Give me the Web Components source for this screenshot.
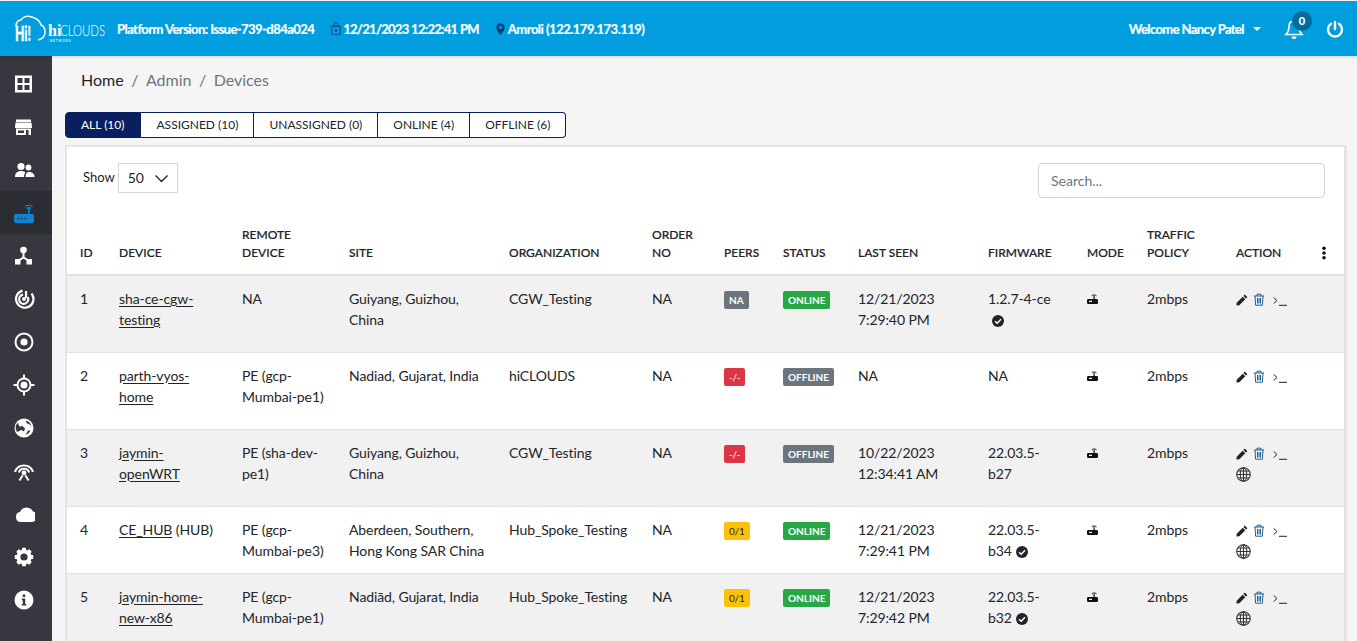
<!DOCTYPE html>
<html lang="en">
<head>
<meta charset="utf-8">
<title>Devices</title>
<style>
  html, body { margin: 0; height: 100%; overflow: hidden; }
  body { font-family: Lato, "Liberation Sans", sans-serif; background: #f5f5f5; color: #212529; }
  app-shell { height: 100vh; }
</style>
</head>
<body>
<app-shell>
  <top-bar slot="top"></top-bar>
  <side-nav slot="side"></side-nav>
  <bread-crumb>
    <span>Home</span><span>Admin</span><span>Devices</span>
  </bread-crumb>
  <filter-tabs></filter-tabs>
  <device-card></device-card>
</app-shell>

<script>
const ICONS = {
  grid: '<path fill-rule="evenodd" d="M2 2.500h17v17H2zM4.500 5v5h5V5zm7 0v5h5V5zm-7 7v5h5v-5zm7 0v5h5v-5z"/>',
  store: '<path fill-rule="evenodd" d="M3 3.500h15V6H3zM2.500 6.500h16l.5 4.500v1H2v-1zM3 12.500h15v6.500h-2.500v-5H13v5H3zM5 14.500v2.500h6v-2.500z"/>',
  people: '<circle cx="8" cy="7.500" r="3.600"/><circle cx="15.500" cy="8.500" r="2.900"/><path d="M2 18c0-4 2.500-6 6-6 2 0 3.500.5 4.500 1.500-1 1-1.500 2.500-1.500 4.500zM12.500 18c0-3.500 1.500-5 3.500-5 3 0 5.500 1.500 5.500 5z"/>',
  radar: '<g fill="none" stroke="#fff" stroke-width="2.200"><path d="M9.500 2.600A8.700 8.700 0 1 0 18.500 5.500"/><path d="M10 6.700A4.600 4.600 0 1 0 14.700 9"/><path d="M13 3v7"/></g><circle cx="11" cy="11" r="2"/>',
  target: '<path fill-rule="evenodd" d="M11 1.500a9.500 9.500 0 1 1 0 19 9.500 9.500 0 0 1 0-19zm0 2a7.500 7.500 0 1 0 0 15 7.500 7.500 0 0 0 0-15z"/><circle cx="11" cy="11" r="3.600"/>',
  crosshair: '<path fill-rule="evenodd" d="M11 3.500a7.500 7.500 0 1 1 0 15 7.500 7.500 0 0 1 0-15zm0 2a5.500 5.500 0 1 0 0 11 5.500 5.500 0 0 0 0-11z"/><circle cx="11" cy="11" r="3.500"/><path d="M10 .5h2v4h-2zM10 17.500h2v4h-2zM.5 10h4v2h-4zM17.500 10h4v2h-4z"/>',
  globe: '<path fill-rule="evenodd" d="M11 1.500a9.500 9.500 0 1 1 0 19 9.500 9.500 0 0 1 0-19zM5 5.500a7.800 7.800 0 0 0-1 9.500l4.500-2 2.500 1.500 1-3-3-3-1.500 1.500L5.500 8zm8-2 .5 2.500 4 2 1 2.500a8 8 0 0 0-5.500-7zm2 10-2.500 4.500a7.800 7.800 0 0 0 5-4.500z"/>',
  wifi: '<g fill="none" stroke="#fff" stroke-width="2"><path d="M2 12a9.500 9.500 0 0 1 18 0"/><path d="M5.800 12.500a5.500 5.500 0 0 1 10.400 0"/><path d="M9.500 15.500 6.500 20.500M12.500 15.500l3 5"/></g><circle cx="11" cy="13" r="2.400"/>',
  cloud: '<path d="M6 19a5 5 0 0 1-1-9.900A7 7 0 0 1 18 8.600a5.300 5.300 0 0 1-.800 10.400z" transform="translate(2 0)"/>',
  gear: '<circle cx="11" cy="11" r="5.600" fill="none" stroke="#fff" stroke-width="4"/><g>' +
    [0, 45, 90, 135, 180, 225, 270, 315].map(a => `<rect x="9" y="1.800" width="4" height="4" rx=".6" transform="rotate(${a} 11 11)"/>`).join('') + '</g>',
  info: '<path fill-rule="evenodd" d="M11 1.500a9.500 9.500 0 1 1 0 19 9.500 9.500 0 0 1 0-19zM9.700 5.500v2.600h2.600V5.500zM8.800 9.500v1.700h1v3.800h-1v1.600h4.400V15h-1V9.500z"/>'
};

const ROUTER = '<path d="M3 12h16a2 2 0 0 1 2 2v5a2 2 0 0 1-2 2H3a2 2 0 0 1-2-2v-5a2 2 0 0 1 2-2z"/><path d="M15 5h1.600v7H15z"/><path fill="none" stroke="currentColor" stroke-width="1.200" d="M12 4.500c2-1.700 5.500-1.700 7.500 0M13.500 6.500c1.200-.9 3.300-.9 4.500 0"/>';

class AppShell extends HTMLElement {
  constructor() {
    super();
    this.attachShadow({ mode: 'open' });
    this.shadowRoot.innerHTML = `
      <style>
        :host { display: grid; grid-template-columns: 52px 1fr; grid-template-rows: 56px 1fr; overflow: hidden; }
        .top { grid-column: 1 / 3; }
        main { padding: 0 10px 0 13px; min-width: 0; overflow: hidden; }
      </style>
      <div class="top"><slot name="top"></slot></div>
      <slot name="side"></slot>
      <main><slot></slot></main>`;
  }
}

class TopBar extends HTMLElement {
  constructor() {
    super();
    this.attachShadow({ mode: 'open' });
    this.shadowRoot.innerHTML = `
      <style>
        :host { display: flex; height: 55px; margin-top: 1px; background: #009ede; color: #fff; align-items: center; box-shadow: 0 1px 3px rgba(0,0,0,.12); position: relative;
          font: 700 13px Lato, sans-serif; letter-spacing: -.55px; -webkit-text-stroke: .2px #fff; }
        .logo { display: flex; margin-left: 14px; width: 103px; flex: none; -webkit-text-stroke: 0; letter-spacing: 0; }
        .item { display: flex; align-items: center; white-space: nowrap; }
        .item svg { fill: #00407f; }
        .date { letter-spacing: -.7px; }
        .ip { letter-spacing: -.5px; }
        .right { margin-left: auto; display: flex; align-items: center; letter-spacing: -.6px; }
        .caret { width: 0; height: 0; border: 4px solid transparent; border-top-color: #fff; border-bottom: 0; margin: 0 23px 0 9px; }
        .bell { position: relative; width: 20px; height: 22px; margin-right: 22px; }
        .badge { position: absolute; top: -7px; left: 8px; width: 20px; height: 20px; border-radius: 50%; background: #006b9c; font-size: 11px; line-height: 20px; text-align: center; letter-spacing: 0; }
        .power { margin-right: 13px; display: flex; }
      </style>
      <div class="logo">
        <svg width="92" height="31" viewBox="0 0 92 31" style="overflow:visible">
          <path fill="none" stroke="#fff" stroke-width="1.500" d="M2 14C2 9 4 7 7 7 9 3 14 2.500 18 4c5 1.500 8 4 9 8 3 1 4 4 4 7 0 4-3 7-7 8"/>
          <text x="1" y="28" fill="#fff" stroke="#fff" stroke-width=".3" font-family="Lato, sans-serif" font-weight="900" font-size="20" textLength="16" lengthAdjust="spacingAndGlyphs">Hi!</text>
          <text x="34" y="23" fill="#fff" font-family="Liberation Serif, serif" font-size="16">hi</text>
          <text x="46" y="23" fill="#fff" font-family="Lato, sans-serif" font-weight="300" font-size="16" textLength="45" lengthAdjust="spacingAndGlyphs">CLOUDS</text>
          <text x="36" y="28.500" fill="#dff" font-family="Lato, sans-serif" font-size="3" letter-spacing=".9">NETWORK</text>
        </svg>
      </div>
      <span class="item" style="margin-right:17px">Platform Version: Issue-739-d84a024</span>
      <span class="item date" style="margin-right:16px">
        <svg width="10" height="13" viewBox="0 0 11 14" style="margin-right:2px"><path fill-rule="evenodd" d="M3 4V2.500a2.500 2.500 0 0 1 5 0V4h2.500v10H.5V4zm1 0h3V2.500a1.500 1.500 0 0 0-3 0zM1.500 5v8h8V5zM4.500 7.500h2v3h-2z"/></svg>12/21/2023 12:22:41 PM</span>
      <span class="item ip">
        <svg width="9" height="12" viewBox="0 0 10 13" style="margin:0 3px 0 1px"><path fill-rule="evenodd" d="M5 0a4.700 4.700 0 0 1 4.700 4.700C9.700 8 5 13 5 13S.3 8 .3 4.700A4.700 4.700 0 0 1 5 0zm0 3a1.700 1.700 0 1 0 0 3.400A1.700 1.700 0 0 0 5 3z"/></svg>Amroli (122.179.173.119)</span>
      <div class="right">
        <span>Welcome Nancy Patel</span><span class="caret"></span>
        <span class="bell">
          <svg width="20" height="22" viewBox="0 0 20 22" fill="none" stroke="#fff" stroke-width="1.600"><path d="M10 3c-3.500 0-5 2.500-5 5.500 0 4-1 6-3 8h16c-2-2-3-4-3-8C15 5.500 13.500 3 10 3z"/><path d="M7.500 18.500a2.500 2.500 0 0 0 5 0z" fill="#fff" stroke="none"/></svg>
          <span class="badge">0</span>
        </span>
        <span class="power">
          <svg width="18" height="18" viewBox="0 0 18 18" fill="none" stroke="#fff" stroke-width="2.400" stroke-linecap="round"><path d="M9 2v7"/><path d="M5 3.800a7 7 0 1 0 8 0"/></svg>
        </span>
      </div>`;
  }
}

class SideNav extends HTMLElement {
  constructor() {
    super();
    this.attachShadow({ mode: 'open' });
    const names = ['grid', 'store', 'people', 'router', 'hub', 'radar', 'target', 'crosshair', 'globe', 'wifi', 'cloud', 'gear', 'info'];
    const links = names.map(n => {
      if (n === 'router') return `<a class="on"><svg width="22" height="22" viewBox="0 0 22 22" fill="#0c84d6" color="#0c84d6">${ROUTER}<circle cx="5.500" cy="16.500" r="1" fill="#36373f"/><circle cx="9" cy="16.500" r="1" fill="#36373f"/><circle cx="12.500" cy="16.500" r="1" fill="#36373f"/></svg></a>`;
      if (n === 'hub') return `<a><svg width="22" height="22" viewBox="0 0 22 22" fill="#fff"><circle cx="10.500" cy="5" r="3.300"/><path d="M2 14h5.500v5.500H2zM13.500 14H19v5.500h-5.500z"/><path fill="none" stroke="#fff" stroke-width="2" d="M10.500 7v5.500M5 16l5.500-3.500L16 16"/></svg></a>`;
      return `<a><svg width="22" height="22" viewBox="0 0 22 22" fill="#fff">${ICONS[n]}</svg></a>`;
    }).join('');
    this.shadowRoot.innerHTML = `
      <style>
        :host { display: block; background: #36373f; padding-top: 6px; }
        a { display: flex; align-items: center; height: 43px; padding-left: 13px; }
        a.on { background: #2c2d32; }
      </style>${links}`;
  }
}

class BreadCrumb extends HTMLElement {
  constructor() {
    super();
    this.attachShadow({ mode: 'open' });
    this.shadowRoot.innerHTML = `
      <style>
        :host { display: block; padding: 14px 0 0 16px; height: 42px; font: 400 16px/20px Lato, sans-serif; color: #6c757d; }
        ::slotted(span:first-child) { color: #212529; }
        ::slotted(span:not(:first-child))::before { content: "/"; margin: 0 7.500px; color: #6c757d; }
      </style>
      <slot></slot>`;
  }
}

class FilterTabs extends HTMLElement {
  constructor() {
    super();
    this.attachShadow({ mode: 'open' });
    const tabs = ['ALL (10)', 'ASSIGNED (10)', 'UNASSIGNED (0)', 'ONLINE (4)', 'OFFLINE (6)'];
    this.shadowRoot.innerHTML = `
      <style>
        :host { display: flex; font: 400 12px/24px Lato, sans-serif; color: #212529; }
        button { font: inherit; color: inherit; background: #fff; border: 1px solid #0a1f5f; border-left: 0; padding: 0 15px; height: 26px; margin: 0; }
        button:first-of-type { background: #0a1f5f; color: #fff; border-left: 1px solid #0a1f5f; border-radius: 4px 0 0 4px; }
        button:nth-of-type(2) { padding: 0 15px 0 16px; }
        button:last-of-type { border-radius: 0 4px 4px 0; }
      </style>
      ${tabs.map(t => `<button>${t}</button>`).join('')}`;
  }
}

class DeviceCard extends HTMLElement {
  constructor() {
    super();
    this.attachShadow({ mode: 'open' });
    this.shadowRoot.innerHTML = `
      <style>
        :host { display: block; margin-top: 7px; background: #fff; border: solid #e4e4e4; border-width: 2px 3px 0 2px; font: 400 14px/21px Lato, sans-serif; color: #212529; }
        .bar { display: flex; justify-content: space-between; box-sizing: border-box; height: 57px; padding: 16px 19px 0 16px; }
        .show { display: flex; align-items: flex-start; font-size: 13px; line-height: 28px; }
        .select { display: flex; align-items: center; justify-content: space-between; box-sizing: border-box; width: 60px; height: 30px; margin-left: 3px; padding: 0 9px 0 9px; border: 1px solid #d5d5d5; font-size: 14px; }
        .search { box-sizing: border-box; width: 287px; height: 35px; border: 1px solid #ced4da; border-radius: 4px; padding: 0 12px; line-height: 33px; color: #6c757d; font-size: 14px; }
      </style>
      <div class="bar">
        <div class="show">Show
          <span class="select">50
            <svg width="13" height="7" viewBox="0 0 13 7" fill="none" stroke="#222" stroke-width="1.400"><path d="M.5.500l6 6 6-6"/></svg>
          </span>
        </div>
        <div class="search">Search...</div>
      </div>
      <device-table></device-table>`;
  }
}

const DEVICES = [
  { id: 1, h: 77, name: 'sha-ce-cgw-testing', remote: 'NA', site: 'Guiyang, Guizhou, China', org: 'CGW_Testing', peers: ['NA', 'grey'], status: 'ONLINE', seen: '12/21/2023<br>7:29:40 PM', fw: '1.2.7-4-ce', ok: 'break' },
  { id: 2, h: 77, name: 'parth-vyos-home', remote: 'PE (gcp-Mumbai-pe1)', site: 'Nadiad, Gujarat, India', org: 'hiCLOUDS', peers: ['-/-', 'red sm'], status: 'OFFLINE', seen: 'NA', fw: 'NA' },
  { id: 3, h: 77, name: 'jaymin-openWRT', remote: 'PE (sha-dev-pe1)', site: 'Guiyang, Guizhou, China', org: 'CGW_Testing', peers: ['-/-', 'red sm'], status: 'OFFLINE', seen: '10/22/2023<br>12:34:41 AM', fw: '22.03.5-b27', globe: true },
  { id: 4, h: 67, name: 'CE_HUB', hub: true, remote: 'PE (gcp-Mumbai-pe3)', site: 'Aberdeen, Southern, Hong Kong SAR China', org: 'Hub_Spoke_Testing', peers: ['0/1', 'amber sm'], status: 'ONLINE', seen: '12/21/2023<br>7:29:41 PM', fw: '22.03.5-b34', ok: 'inline', globe: true },
  { id: 5, h: 74, name: 'jaymin-home-new-x86', remote: 'PE (gcp-Mumbai-pe1)', site: 'Nadiād, Gujarat, India', org: 'Hub_Spoke_Testing', peers: ['0/1', 'amber sm'], status: 'ONLINE', seen: '12/21/2023<br>7:29:42 PM', fw: '22.03.5-b32', ok: 'inline', globe: true }
];

class DeviceTable extends HTMLElement {
  constructor() {
    super();
    this.attachShadow({ mode: 'open' });
    this.shadowRoot.innerHTML = `
      <style>
        :host { display: block; letter-spacing: -.1px; }
        table { border-collapse: collapse; table-layout: fixed; width: 100%; }
        th { height: 71px; padding: 0 10px 12px 13px; box-sizing: border-box; vertical-align: bottom; text-align: left; font: 500 12px/18px Lato, sans-serif; letter-spacing: 0; color: #212529; border-bottom: 2px solid #dee2e6; -webkit-text-stroke: .2px #212529; }
        th:last-child { padding-left: 15px; }
        td { padding: 12px 10px 0 13px; vertical-align: top; border-bottom: 1px solid #dee2e6; box-sizing: border-box; }
        td:nth-child(10) { padding-right: 16px; }
        tbody tr:nth-child(odd) td { background: #f1f1f1; }
        u { text-underline-offset: 2px; }
        .pill { display: inline-block; vertical-align: top; margin-top: 3px; height: 18px; padding: 0 5px; border-radius: 2px; font: 700 10px/18px Lato, sans-serif; letter-spacing: 0; color: #fff; }
        .sm { font-weight: 400; letter-spacing: -.2px; }
        .grey { background: #6c757d; } .red { background: #dc3545; } .green { background: #28a745; }
        .amber { background: #ffc107; color: #212529; }
        .ic { display: inline-block; vertical-align: -2px; }
      </style>
      <table>
        <colgroup>
          <col style="width:39px"><col style="width:123px"><col style="width:107px"><col style="width:160px"><col style="width:143px"><col style="width:72px"><col style="width:59px"><col style="width:75px"><col style="width:130px"><col style="width:99px"><col style="width:60px"><col style="width:89px"><col style="width:84px"><col>
        </colgroup>
        <thead><tr>
          <th>ID</th><th>DEVICE</th><th>REMOTE DEVICE</th><th>SITE</th><th>ORGANIZATION</th><th>ORDER NO</th><th>PEERS</th><th>STATUS</th><th>LAST SEEN</th><th>FIRMWARE</th><th>MODE</th><th>TRAFFIC POLICY</th><th>ACTION</th>
          <th><svg width="4" height="14" viewBox="0 0 4 14" fill="#111" style="vertical-align:-3px"><circle cx="2" cy="2.200" r="1.800"/><circle cx="2" cy="7" r="1.800"/><circle cx="2" cy="11.800" r="1.800"/></svg></th>
        </tr></thead>
        <tbody>${DEVICES.map(d => this.row(d)).join('')}</tbody>
      </table>`;
  }
  row(d) {
    const check = m => `<svg class="ic" style="margin-left:${m}px" width="12" height="12" viewBox="0 0 12 12"><circle cx="6" cy="6" r="6" fill="#212529"/><path d="M3 6.200 5.200 8.300 9 4.200" fill="none" stroke="#fff" stroke-width="1.400"/></svg>`;
    const fw = d.ok === 'break' ? `${d.fw}<br>${check(4)}` : d.ok === 'inline' ? `${d.fw} ${check(1)}` : d.fw;
    const globe = d.globe ? '<br><svg class="ic" style="margin-top:4px" width="15" height="15" viewBox="0 0 14 14" fill="none" stroke="#333" stroke-width="1"><circle cx="7" cy="7" r="6.300"/><ellipse cx="7" cy="7" rx="3" ry="6.300"/><path d="M7 .7v12.600M.7 7h12.600M1.600 3.800h10.800M1.600 10.200h10.800"/></svg>' : '';
    const name = d.hub ? `<u>${d.name}</u> (HUB)` : `<u>${d.name}</u>`;
    const status = d.status === 'ONLINE' ? 'green' : 'grey';
    return `<tr style="height:${d.h}px">
      <td>${d.id}</td><td>${name}</td><td>${d.remote}</td><td>${d.site}</td><td>${d.org}</td><td>NA</td>
      <td><span class="pill ${d.peers[1]}">${d.peers[0]}</span></td>
      <td><span class="pill ${status}">${d.status}</span></td>
      <td>${d.seen}</td><td>${fw}</td>
      <td><svg class="ic" style="vertical-align:0" width="11" height="10" viewBox="0 0 11 10" fill="#111"><rect y="5" width="11" height="5" rx="1.200"/><rect x="2" y="6.800" width="3" height="1.200" fill="#fff"/><rect x="6.500" y="2" width="1.200" height="3"/><path d="M4.800 1.800C6 .7 8 .7 9.500 1.800" fill="none" stroke="#111"/></svg></td>
      <td>2mbps</td>
      <td style="white-space:nowrap">
        <svg class="ic" width="12" height="12" viewBox="0 0 12 12" fill="#222"><path d="M8.800.6 11.400 3.200 10 4.600 7.400 2zM6.700 2.700 9.300 5.300 3.300 11.300 .4 11.600 .7 8.700z"/></svg>
        <svg class="ic" width="12" height="13" viewBox="0 0 12 13" fill="none" stroke="#1f5f8f" style="margin-left:2px"><path d="M1 3h10M4 3V1.200h4V3M2 3l.6 9.200h6.800L10 3M4.500 5v5.500M6 5v5.500M7.500 5v5.500"/></svg>
        <svg class="ic" width="14" height="10" viewBox="0 0 14 10" fill="none" stroke="#222" style="margin-left:4px"><path d="M.7 1.500 4 4.500.7 7.500M6 9.300h8"/></svg>${globe}
      </td>
      <td></td>
    </tr>`;
  }
}

customElements.define('app-shell', AppShell);
customElements.define('top-bar', TopBar);
customElements.define('side-nav', SideNav);
customElements.define('bread-crumb', BreadCrumb);
customElements.define('filter-tabs', FilterTabs);
customElements.define('device-table', DeviceTable);
customElements.define('device-card', DeviceCard);
</script>
</body>
</html>
